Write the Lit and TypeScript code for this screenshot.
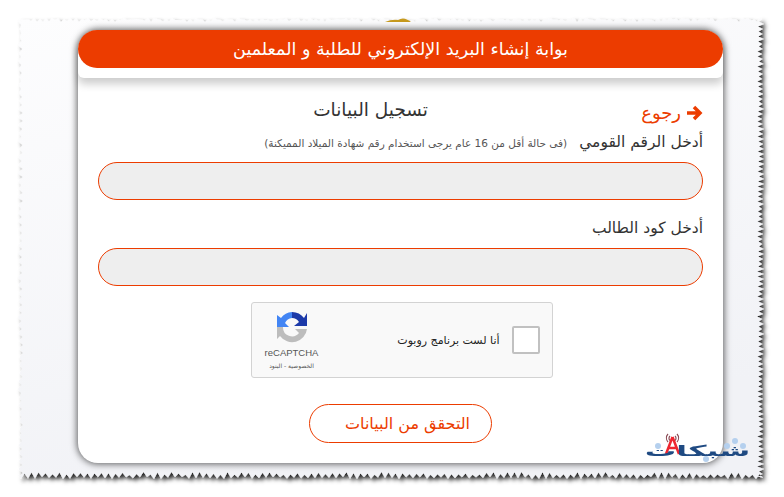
import { LitElement, html, css, svg } from "lit";
import { customElement } from "lit/decorators.js";

function tornPath(): string {
  let seed = 7;
  const r = () => ((seed = (seed * 16807) % 2147483647) % 1000) / 1000;
  const L = 19, T = 19, R = 763, B = 477;
  const p: string[] = [];
  for (let x = L; x < R; x += 6) p.push(`${x},${T + r() * 3}`, `${x + 3},${T - 1 + r() * 2}`);
  for (let y = T; y < B; y += 5) p.push(`${R - 1 + r() * 2},${y}`, `${R - 6 + r() * 2},${y + 2.5}`);
  for (let x = R; x > L; x -= 7) p.push(`${x},${B + r() * 2}`, `${x - 3.5},${B - 5 + r() * 3}`);
  for (let y = B; y > T; y -= 8) p.push(`${L - 1 + r() * 2},${y}`, `${L + 2 + r() * 2},${y - 4}`);
  return p.join(" ");
}

@customElement("app-root")
export class AppRoot extends LitElement {
  static styles = css`
    :host {
      display: block;
      position: relative;
      width: 784px;
      height: 497px;
      overflow: hidden;
      background: #fff;
      font-family: "DejaVu Sans", "Noto Sans", sans-serif;
      color: #333;
    }
    .paper { position: absolute; inset: 0; }
    .page { position: relative; box-sizing: border-box; height: 497px; padding: 30px 61px 34px 78px; }
    .card {
      box-sizing: border-box;
      height: 433px;
      background: #fff;
      border-radius: 20px;
      box-shadow: 0 0 7px 1px rgba(0, 0, 0, 0.62);
      direction: rtl;
      display: flex;
      flex-direction: column;
    }
    .head-wrap {
      height: 48px;
      box-shadow: 0 6px 9px rgba(0, 0, 0, 0.2);
      background: #fff;
      border-radius: 20px 20px 6px 6px;
    }
    .head {
      height: 38px;
      background: #ec3c00;
      border-radius: 19px;
      color: #fff;
      font-size: 17.5px;
      line-height: 38px;
      text-align: center;
    }
    .body { flex: 1; padding: 22px 20px 0 20px; display: flex; flex-direction: column; }
    .top { display: flex; height: 32px; align-items: flex-start; }
    .back { display: flex; align-items: center; gap: 6px; color: #ec3c00; font-size: 18px; width: 275px; padding-top: 2px; }
    .title { font-size: 18.5px; color: #333; line-height: 20px; }
    .label-row { display: flex; align-items: baseline; gap: 12px; height: 20px; line-height: 20px; font-size: 15.5px; }
    .hint { font-size: 10.5px; color: #555; }
    .field {
      height: 38px;
      box-sizing: border-box;
      border: 1px solid #ec3c00;
      border-radius: 19px;
      background: #eee;
      margin-top: 10px;
    }
    .second { margin-top: 18px; }
    .captcha {
      align-self: center;
      box-sizing: border-box;
      width: 302px;
      height: 76px;
      margin-top: 16px;
      background: #f9f9f9;
      border: 1px solid #d3d3d3;
      border-radius: 3px;
      display: flex;
      align-items: center;
      padding: 0 12px 0 0;
      margin-right: -2px;
    }
    .check { width: 28px; height: 28px; box-sizing: border-box; background: #fff; border: 2px solid #c1c1c1; border-radius: 2px; }
    .robot { font-size: 11px; color: #222; margin-right: 12px; flex: 1; }
    .brand { width: 80px; margin-right: auto; display: flex; flex-direction: column; align-items: center; direction: ltr; }
    .brand svg { display: block; }
    .rc { font-family: "Liberation Sans", sans-serif; font-size: 9.5px; color: #555; margin-top: 4px; }
    .terms { font-size: 6px; color: #555; margin-top: 4px; direction: rtl; }
    .submit {
      align-self: center;
      box-sizing: border-box;
      width: 183px;
      height: 39px;
      margin-top: 26px;
      padding: 0 0 0 14px;
      border: 1px solid #ec3c00;
      border-radius: 20px;
      background: #fff;
      color: #ec3c00;
      font: 16px "DejaVu Sans", sans-serif;
      direction: rtl;
    }
    .logo { position: absolute; left: 645px; top: 431px; width: 105px; height: 32px; direction: rtl; }
    .logo svg { position: absolute; left: 0; top: 0; }
    .logo span {
      position: absolute;
      left: 0;
      right: 0;
      top: 7px;
      text-align: center;
      color: #1f4a82;
      font: bold 15px "DejaVu Sans", sans-serif;
      line-height: 26px;
      transform: scaleX(2.1);
    }
  `;

  render() {
    return html`
      <svg class="paper" width="784" height="497" viewBox="0 0 784 497">
        <defs>
          <filter id="s" x="-5%" y="-5%" width="110%" height="110%">
            <feDropShadow dx="3" dy="3" stdDeviation="2" flood-color="#000" flood-opacity="0.85"></feDropShadow>
          </filter>
          <linearGradient id="g" x1="0" y1="0" x2="0.35" y2="1">
            <stop offset="0" stop-color="#fdfdfe"></stop>
            <stop offset="1" stop-color="#f1f2f6"></stop>
          </linearGradient>
        </defs>
        <polygon points=${tornPath()} fill="url(#g)" filter="url(#s)"></polygon>
        ${svg`<path d="M385 22 Q392 19 398 20 Q404 16 411 22 Z" fill="#c79a1e"></path>`}
      </svg>
      <div class="page">
        <div class="card">
          <div class="head-wrap">
            <div class="head">بوابة إنشاء البريد الإلكتروني للطلبة و المعلمين</div>
          </div>
          <div class="body">
            <div class="top">
              <div class="back">
                <svg width="16" height="16" viewBox="0 0 16 16">
                  <path d="M0 8H13M7 2L13 8L7 14" fill="none" stroke="#ec3c00" stroke-width="3.500"></path>
                </svg>
                <span>رجوع</span>
              </div>
              <div class="title">تسجيل البيانات</div>
            </div>
            <div class="label-row">
              <span>أدخل الرقم القومي</span>
              <span class="hint">(فى حالة أقل من 16 عام يرجى استخدام رقم شهادة الميلاد المميكنة)</span>
            </div>
            <div class="field"></div>
            <div class="label-row second">
              <span>أدخل كود الطالب</span>
            </div>
            <div class="field"></div>
            <div class="captcha">
              <div class="check"></div>
              <div class="robot">أنا لست برنامج روبوت</div>
              <div class="brand">
                <svg width="32" height="32" viewBox="0 0 32 32">
                  <path d="M16 1 A15 15 0 0 1 28 7 L31 2 V15 H18 L23 11 A9 9 0 0 0 16 7 Z" fill="#1c3aa9"></path>
                  <path d="M16 1 V7 A9 9 0 0 0 9 12 L13 16 H1 V4 L5 7 A15 15 0 0 1 16 1 Z" fill="#4285f4"></path>
                  <path d="M1 16 H7 A9 9 0 0 0 23 22 L19 18 H31 A15 15 0 0 1 4 25 L1 28 Z" fill="#bdbdbd"></path>
                </svg>
                <div class="rc">reCAPTCHA</div>
                <div class="terms">الخصوصية - البنود</div>
              </div>
            </div>
            <button class="submit">التحقق من البيانات</button>
          </div>
        </div>
      </div>
      <div class="logo">
        <svg width="105" height="32" viewBox="0 0 105 32">
          <path d="M23 3a6 6 0 0 0 0 8M25 5a3 3 0 0 0 0 4.500M32 3a6 6 0 0 1 0 8M30 5a3 3 0 0 1 0 4.500" fill="none" stroke="#8a4a55" stroke-width="1.200"></path>
          <path d="M27.500 6L21 23M27.500 6L34 23M24 17H31" fill="none" stroke="#ee2630" stroke-width="2.500"></path>
          <g fill="#b5d0ee">
            <circle cx="13" cy="15" r="3"></circle>
            <circle cx="90" cy="10" r="3"></circle>
            <circle cx="82" cy="15" r="3"></circle>
            <circle cx="98" cy="15" r="3"></circle>
            <circle cx="61" cy="28" r="3"></circle>
          </g>
        </svg>
        <span>شبكات</span>
      </div>
    `;
  }
}
